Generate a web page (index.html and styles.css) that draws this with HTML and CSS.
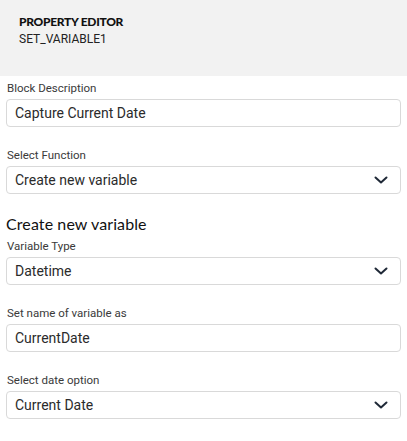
FILE: index.html
```html
<!DOCTYPE html>
<html>
<head>
<meta charset="utf-8">
<link rel="stylesheet" href="styles.css">
</head>
<body>
<div class="header">
  <div class="title">PROPERTY EDITOR</div>
  <div class="subtitle">SET_VARIABLE1</div>
</div>
<div class="content">
  <div class="field">
    <div class="label">Block Description</div>
    <div class="box">Capture Current Date</div>
  </div>
  <div class="field">
    <div class="label">Select Function</div>
    <div class="box select">Create new variable
      <svg class="chev" width="14" height="8" viewBox="0 0 14 8"><path d="M1.5 1.5 L7 6.5 L12.5 1.5" fill="none" stroke="#1f2937" stroke-width="2" stroke-linecap="round" stroke-linejoin="round"/></svg>
    </div>
  </div>
  <div class="section">Create new variable</div>
  <div class="field first">
    <div class="label">Variable Type</div>
    <div class="box select">Datetime
      <svg class="chev" width="14" height="8" viewBox="0 0 14 8"><path d="M1.5 1.5 L7 6.5 L12.5 1.5" fill="none" stroke="#1f2937" stroke-width="2" stroke-linecap="round" stroke-linejoin="round"/></svg>
    </div>
  </div>
  <div class="field">
    <div class="label">Set name of variable as</div>
    <div class="box">CurrentDate</div>
  </div>
  <div class="field">
    <div class="label">Select date option</div>
    <div class="box select">Current Date
      <svg class="chev" width="14" height="8" viewBox="0 0 14 8"><path d="M1.5 1.5 L7 6.5 L12.5 1.5" fill="none" stroke="#1f2937" stroke-width="2" stroke-linecap="round" stroke-linejoin="round"/></svg>
    </div>
  </div>
</div>
</body>
</html>
```

FILE: styles.css
```css
html, body {
  margin: 0;
  padding: 0;
  background: #ffffff;
}
body {
  font-family: Roboto, "Liberation Sans", sans-serif;
  color: #222;
}
.header {
  background: #f2f2f2;
  height: 76px;
  box-sizing: border-box;
  padding: 14px 19px 0;
}
.title {
  font-family: Lato, sans-serif;
  font-weight: 900;
  font-size: 12px;
  line-height: 16px;
  color: #111;
  letter-spacing: -0.3px;
}
.subtitle {
  font-family: Roboto, sans-serif;
  font-size: 12px;
  line-height: 16px;
  color: #222;
  margin-top: 1px;
}
.content {
  padding: 0 6px 0 6px;
}
.field {
  margin-top: 21px;
}
.field:first-child {
  margin-top: 5px;
}
.field.first {
  margin-top: 5px;
}
.label {
  font-size: 11.5px;
  line-height: 14px;
  color: #3a3a3a;
  padding-left: 1px;
  margin-bottom: 4px;
}
.box {
  height: 28px;
  box-sizing: border-box;
  border: 1px solid #d9d9d9;
  border-radius: 4px;
  padding: 0 8px;
  display: flex;
  align-items: center;
  justify-content: space-between;
  font-size: 14px;
  color: #2b2b2b;
}
.chev {
  margin-right: 4px;
}
.section {
  font-family: Lato, sans-serif;
  font-weight: 400;
  font-size: 16px;
  line-height: 20px;
  letter-spacing: 0.1px;
  color: #111;
  margin-top: 20px;
}
```
